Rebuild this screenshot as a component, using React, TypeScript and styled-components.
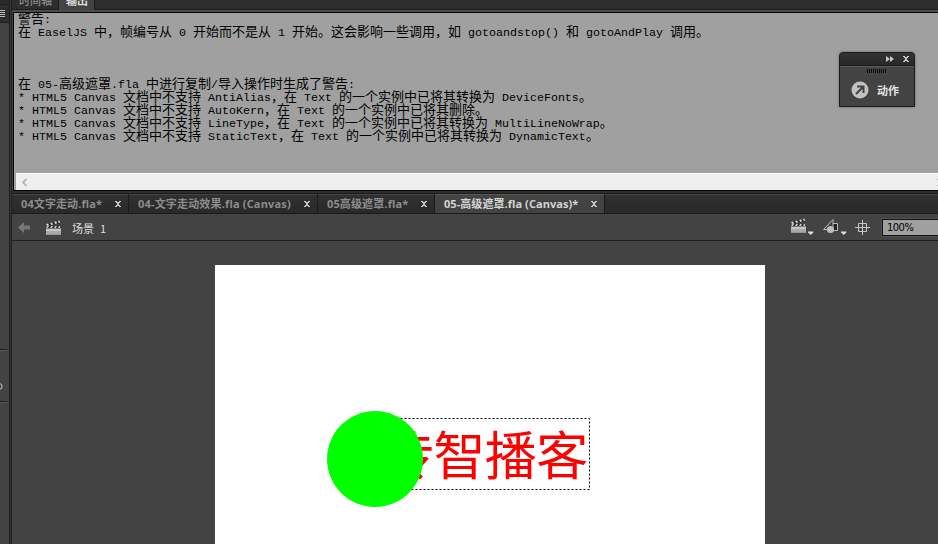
import React from "react";
import styled, { createGlobalStyle } from "styled-components";

const Global = createGlobalStyle`
  *{box-sizing:border-box}
  html,body{margin:0;padding:0;background:#434343;overflow:hidden}
  svg{display:block;flex:none}
`;

const Window = styled.div`
  position: relative;
  display: flex;
  width: 938px;
  height: 544px;
  overflow: hidden;
  background: #434343;
  font-family: "Open Sans", "Noto Sans CJK SC", sans-serif;
`;
const Dock = styled.div`
  display: flex;
  flex-direction: column;
  flex: none;
  width: 12px;
  border-right: 1px solid #1e1e1e;
  box-shadow: inset -1px 0 0 #383838, inset -2px 0 0 #1e1e1e;
`;
const DockHead = styled.div`
  height: 23px;
  width: 9px;
  padding-top: 9px;
  background: linear-gradient(#2b2b2b 0 4px, #1e1e1e 4px 5px, #2e2e2e 5px 22px, #1e1e1e 22px);
`;
const DockSpace = styled.div<{ $h: number }>`
  height: ${(p) => p.$h}px;
`;
const DockRule = styled.div`
  width: 7px;
  height: 2px;
  background: #1e1e1e;
  border-bottom: 1px solid #595959;
`;
const Main = styled.div`
  display: flex;
  flex-direction: column;
  flex: 1;
  min-width: 0;
`;
const PanelTabs = styled.div`
  display: flex;
  flex: none;
  height: 10px;
  overflow: hidden;
  background: linear-gradient(#2d2d2d 0 9px, #1d1d1d 9px);
`;
const PanelTab = styled.div<{ $active?: boolean; $w: number }>`
  width: ${(p) => p.$w}px;
  height: 10px;
  padding-left: 7px;
  border-right: 1px solid #1d1d1d;
  background: ${(p) => (p.$active ? "#434343" : "transparent")};
  color: ${(p) => (p.$active ? "#dcdcdc" : "#8b8b8b")};
  font-size: 11px;
  font-weight: ${(p) => (p.$active ? 700 : 500)};
  line-height: 2px;
`;
const Output = styled.div`
  display: flex;
  flex-direction: column;
  flex: none;
  height: 181px;
  border-top: 2px solid #4b4b4b;
  border-left: 1px solid #434343;
`;
const OutputInner = styled.div`
  display: flex;
  flex-direction: column;
  flex: 1;
  border: solid #050505;
  border-width: 1px 0 1px 1px;
  background: #a0a0a0;
`;
const Log = styled.div`
  height: 160px;
  padding-left: 4px;
  color: #000;
`;
const LogLine = styled.div`
  display: flex;
  height: 13px;
  white-space: pre;
`;
const Han = styled.span`
  font: 13px/10px "Noto Sans CJK SC", sans-serif;
`;
const Latin = styled.span`
  font: 11.67px/14px "Liberation Mono", monospace;
`;
const ScrollBar = styled.div`
  display: flex;
  align-items: center;
  justify-content: space-between;
  height: 17px;
  margin-left: 2px;
  padding-left: 5px;
  background: #efefef;
  border-top: 1px solid #fff;
`;
const DocTabs = styled.div`
  display: flex;
  flex: none;
  height: 23px;
  padding-top: 1px;
  border-top: 2px solid #2d2d2d;
  border-bottom: 1px solid #1b1b1b;
  background: linear-gradient(#1b1b1b 0 1px, #444 1px 2px, #303030 2px, #292929);
`;
const DocTab = styled.div<{ $w: number; $active?: boolean }>`
  display: flex;
  align-items: center;
  justify-content: space-between;
  width: ${(p) => p.$w}px;
  padding: 0 7px 0 9px;
  border-right: 1px solid #1b1b1b;
  background: ${(p) => (p.$active ? "linear-gradient(#585858 0 1px, #434343 1px)" : "transparent")};
  color: ${(p) => (p.$active ? "#d4d4d4" : "#8c8c8c")};
  font-size: 11px;
  font-weight: 700;
  line-height: 18px;
  white-space: pre;
`;
const TabLabel = styled.span<{ $ls: number }>`
  letter-spacing: ${(p) => p.$ls}px;
`;
const SceneBar = styled.div`
  display: flex;
  flex: none;
  align-items: center;
  height: 27px;
  padding-left: 6px;
  border-bottom: 1px solid #1f1f1f;
  color: #dcdcdc;
`;
const SceneIcon = styled.span`
  margin: 1px 0 0 15px;
`;
const SceneName = styled.span`
  display: flex;
  align-items: center;
  margin: 2px 0 0 11px;
  flex: 1;
  gap: 6px;
  font: 11px/16px "Noto Sans CJK SC", sans-serif;
`;
const Tools = styled.div`
  display: flex;
  align-items: center;
  height: 26px;
`;
const Tool = styled.span<{ $gap: number }>`
  display: flex;
  gap: 2px;
  margin: 0 ${(p) => p.$gap}px 1px 0;
`;
const Zoom = styled.div`
  width: 56px;
  height: 17px;
  margin-left: 12px;
  padding-left: 4px;
  border: 1px solid #111;
  border-right: 0;
  background: #a0a0a0;
  box-shadow: 0 0 0 1px #535353;
  color: #000;
  font: 11px/15px "DejaVu Sans Condensed", "DejaVu Sans", sans-serif;
  letter-spacing: -0.5px;
`;
const Pasteboard = styled.div`
  flex: 1;
  padding: 24px 0 0 203px;
`;
const Stage = styled.div`
  position: relative;
  width: 550px;
  height: 300px;
  background: #fff;
`;
const TextField = styled.div`
  position: absolute;
  left: 165px;
  top: 153px;
  width: 210px;
  height: 72px;
  padding-left: 2px;
  color: #f00;
  font: 52px/70px "Noto Sans CJK SC", sans-serif;
  letter-spacing: -0.6px;
  white-space: nowrap;
`;
const Marquee = styled.svg`
  position: absolute;
  left: 0;
  top: 0;
`;
const Circle = styled.div`
  position: absolute;
  left: 112px;
  top: 146px;
  width: 96px;
  height: 96px;
  border-radius: 50%;
  background: #0f0;
`;
const Floating = styled.div`
  position: absolute;
  left: 839px;
  top: 52px;
  width: 76px;
  height: 55px;
  border: 1px solid #1b1b1b;
  border-radius: 4px 4px 0 0;
  background: #434343;
  box-shadow: 0 0 3px rgba(0, 0, 0, 0.35);
  overflow: hidden;
`;
const FloatHead = styled.div`
  display: flex;
  align-items: center;
  justify-content: flex-end;
  gap: 9px;
  height: 13px;
  padding-right: 5px;
  border-bottom: 1px solid #1b1b1b;
  background: linear-gradient(#333, #282828);
`;
const Grip = styled.div`
  height: 8px;
  border-top: 1px solid #5a5a5a;
  padding: 2px 0 0 27px;
`;
const FloatBody = styled.div`
  display: flex;
  align-items: center;
  gap: 8px;
  padding: 0 0 1px 11px;
  height: 32px;
  color: #e4e4e4;
  font: 700 11px/16px "Noto Sans CJK SC", sans-serif;
`;

const Close = ({ color = "#c9c9c9" }: { color?: string }) => (
  <svg width="6" height="6" viewBox="0 0 6 6" shapeRendering="crispEdges">
    <path d="M0 0h2v1h2v-1h2v1h-1v1h-1v2h1v1h1v1h-2v-1h-2v1h-2v-1h1v-1h1v-2h-1v-1h-1z" fill={color} />
  </svg>
);
const Clapper = () => (
  <svg width="16" height="15" viewBox="0 0 16 15">
    <path d="M1 4.200L14 .6l.7 2.600L1.600 6z" fill="#1e1e1e" />
    <path d="M1 4l2-.6 1.300 2-2.300.6zM5 3l2-.6L8.300 4.400l-2 .6zM9 1.900l2-.6 1.300 2-2 .6zM12.600.9l1.800-.5.7 2.400-1.100.3z" fill="#d4d4d4" />
    <path d="M1 6h14v3H1z" fill="#252525" />
    <path d="M2 6h2L3 8H1zM6 6h2L7 8H5zM10 6h2l-1 2H9zM14 6h1v2h-2zM1 8.500h15v6H1z" fill="#c6c6c6" />
    <path d="M1 11h15v3.500H1z" fill="#a9a9a9" />
  </svg>
);
const Caret = () => (
  <svg width="6" height="17" viewBox="0 0 6 17">
    <path d="M0 13.500h5.400v1L2.700 17 0 14.500z" fill="#ddd" />
  </svg>
);
const Shapes = () => (
  <svg width="17" height="16" viewBox="0 0 17 16">
    <path d="M8.500 5.500h7v7h-7z" fill="#222" stroke="#bbb" />
    <path d="M1.500 11.500L11 1.500v10z" fill="#444" stroke="#bbb" />
    <circle cx="8.500" cy="11.500" r="3.600" fill="#bdbdbd" />
  </svg>
);
const Center = () => (
  <svg width="15" height="15" viewBox="0 0 15 15">
    <path d="M7.500 0v15M0 7.500h15M3.500 3.500h8v8h-8z" fill="none" stroke="#c8c8c8" />
  </svg>
);

const lines = [
  "警告:",
  "在 EaselJS 中，帧编号从 0 开始而不是从 1 开始。这会影响一些调用，如 gotoandstop() 和 gotoAndPlay 调用。",
  "",
  "",
  "",
  "在 05-高级遮罩.fla 中进行复制/导入操作时生成了警告:",
  "* HTML5 Canvas 文档中不支持 AntiAlias，在 Text 的一个实例中已将其转换为 DeviceFonts。",
  "* HTML5 Canvas 文档中不支持 AutoKern，在 Text 的一个实例中已将其删除。",
  "* HTML5 Canvas 文档中不支持 LineType，在 Text 的一个实例中已将其转换为 MultiLineNoWrap。",
  "* HTML5 Canvas 文档中不支持 StaticText，在 Text 的一个实例中已将其转换为 DynamicText。",
];

const tabs = [
  { label: "04文字走动.fla*", w: 117, ls: 0.1 },
  { label: "04-文字走动效果.fla (Canvas)", w: 189, ls: 0.17 },
  { label: "05高级遮罩.fla*", w: 117, ls: 0.13 },
  { label: "05-高级遮罩.fla (Canvas)*", w: 170, ls: 0.06, active: true },
];

export default function App() {
  return (
    <>
      <Global />
      <Window>
        <Dock>
          <DockHead>
            <svg width="5" height="9" viewBox="0 0 5 9">
              <path d="M0 1.500h5M0 3.500h5M0 5.500h5M0 7.500h5" stroke="#bbb" />
            </svg>
          </DockHead>
          <DockSpace $h={326} />
          <DockRule />
          <DockSpace $h={32} />
          <svg width="3" height="7" viewBox="0 0 3 7">
            <path d="M0 .7q2 .3 2 2.800t-2 2.800" fill="none" stroke="#ccc" />
          </svg>
          <DockSpace $h={11} />
          <DockRule />
        </Dock>
        <Main>
          <PanelTabs>
            <PanelTab $w={47}>时间轴</PanelTab>
            <PanelTab $w={36} $active>输出</PanelTab>
          </PanelTabs>
          <Output>
            <OutputInner>
              <Log>
                {lines.map((line, i) => (
                  <LogLine key={i}>
                    {(line.match(/[\x00-\x7f]+|[^\x00-\x7f]+/g) || []).map((part, j) =>
                      part.charCodeAt(0) < 128 ? <Latin key={j}>{part}</Latin> : <Han key={j}>{part}</Han>
                    )}
                  </LogLine>
                ))}
              </Log>
              <ScrollBar>
                <svg width="7" height="9" viewBox="0 0 7 9">
                  <path d="M5.500 1L2 4.500 5.500 8" fill="none" stroke="#b8b8b8" strokeWidth="1.800" />
                </svg>
                <svg width="1" height="9" viewBox="0 0 1 9">
                  <path d="M0 1h1v1H0zM0 7h1v1H0z" fill="#b0b0b0" />
                </svg>
              </ScrollBar>
            </OutputInner>
          </Output>
          <DocTabs>
            {tabs.map((t) => (
              <DocTab key={t.label} $w={t.w} $active={t.active}>
                <TabLabel $ls={t.ls}>{t.label}</TabLabel>
                <Close />
              </DocTab>
            ))}
          </DocTabs>
          <SceneBar>
            <svg width="12" height="11" viewBox="0 0 12 11">
              <path d="M0 5.500L6 0v3.500h6v4H6V11z" fill="#777" />
            </svg>
            <SceneIcon>
              <Clapper />
            </SceneIcon>
            <SceneName>
              <span>场景</span>
              <span>1</span>
            </SceneName>
            <Tools>
              <Tool $gap={8}>
                <Clapper />
                <Caret />
              </Tool>
              <Tool $gap={8}>
                <Shapes />
                <Caret />
              </Tool>
              <Center />
              <Zoom>100%</Zoom>
            </Tools>
          </SceneBar>
          <Pasteboard>
            <Stage>
              <TextField>传智播客</TextField>
              <Marquee width="550" height="300" viewBox="0 0 550 300">
                <path d="M165.500 153.500H374.500V224.500H165.500z" fill="none" stroke="#000" strokeDasharray="2 2" />
              </Marquee>
              <Circle />
            </Stage>
          </Pasteboard>
        </Main>
        <Floating>
          <FloatHead>
            <svg width="8" height="6" viewBox="0 0 8 6">
              <path d="M0 0l4 3-4 3zM4 0l4 3-4 3z" fill="#c4c4c4" />
            </svg>
            <Close />
          </FloatHead>
          <Grip>
            <svg width="20" height="4" viewBox="0 0 20 4">
              <path d="M0 2h20" stroke="#0a0a0a" strokeWidth="4" strokeDasharray="1 1" />
            </svg>
          </Grip>
          <FloatBody>
            <svg width="18" height="18" viewBox="0 0 18 18">
              <circle cx="9" cy="9" r="8.500" fill="#c2c2c2" />
              <path d="M5 13l7-7M6 5.500h6.500V12" fill="none" stroke="#444" strokeWidth="2" />
            </svg>
            动作
          </FloatBody>
        </Floating>
      </Window>
    </>
  );
}
